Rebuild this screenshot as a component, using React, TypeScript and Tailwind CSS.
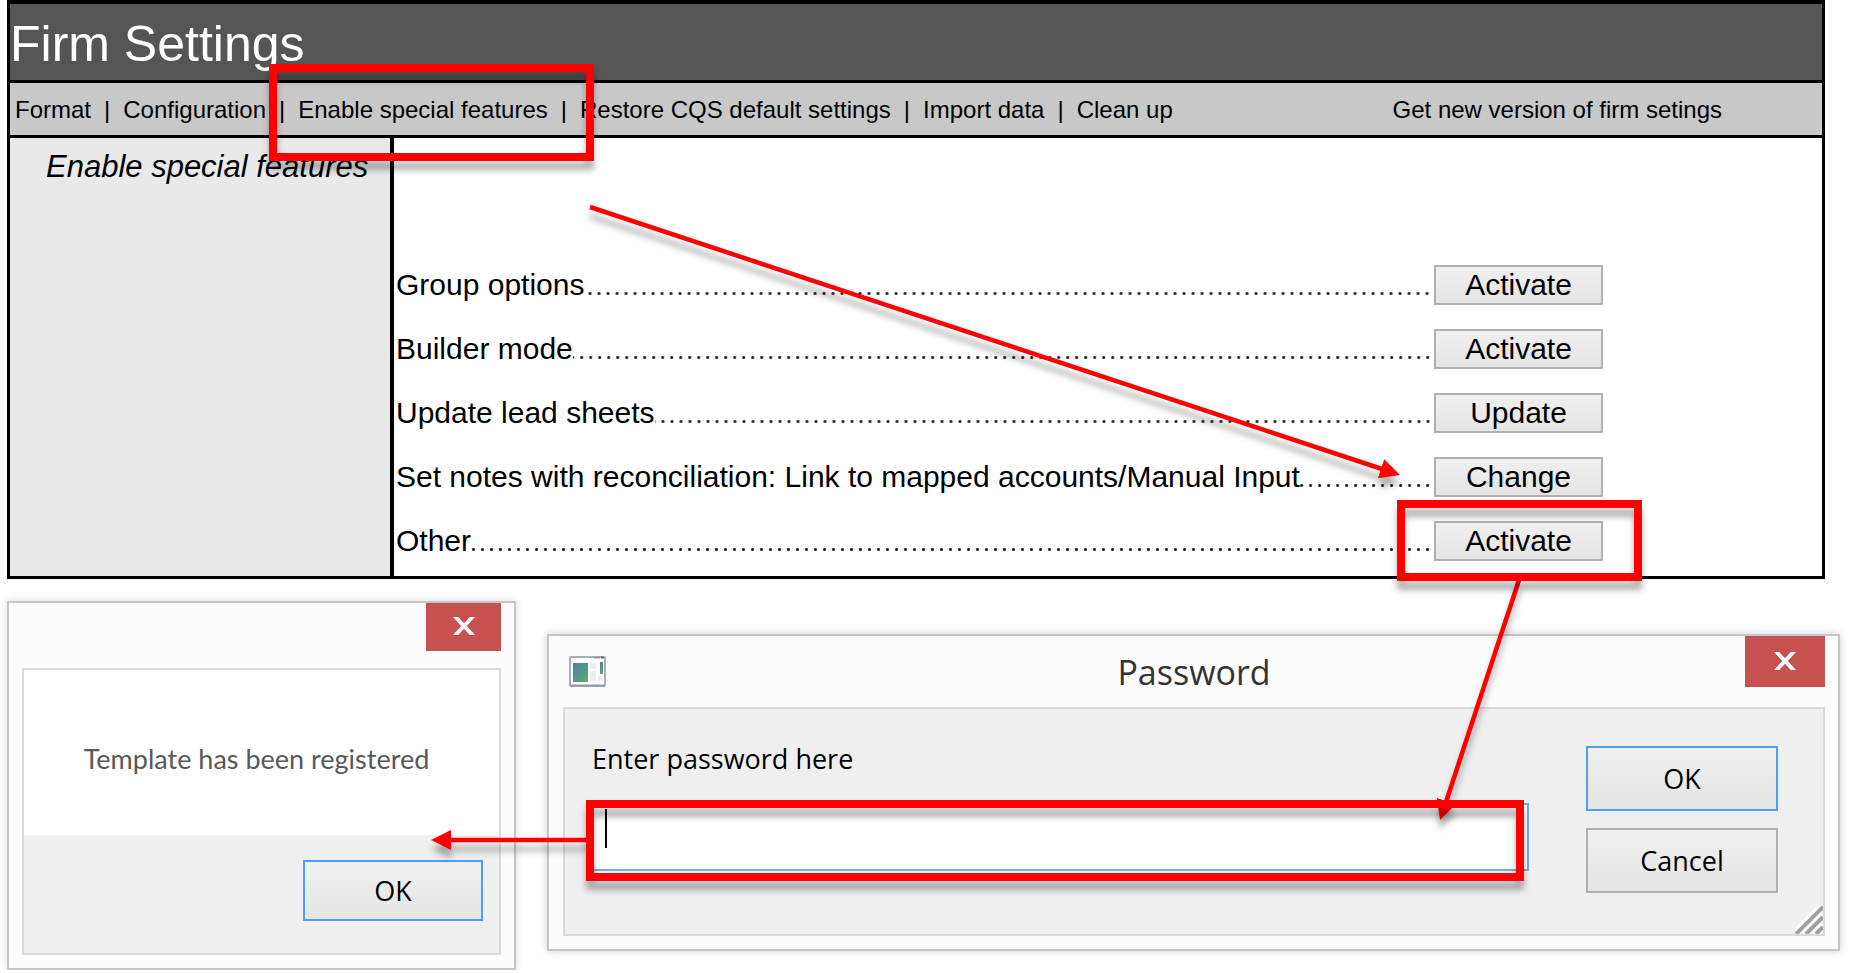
import { clsx } from "clsx";

const menu = [
  "Format",
  "Configuration",
  "Enable special features",
  "Restore CQS default settings",
  "Import data",
  "Clean up",
];

const features = [
  { label: "Group options", action: "Activate" },
  { label: "Builder mode", action: "Activate" },
  { label: "Update lead sheets", action: "Update" },
  { label: "Set notes with reconciliation: Link to mapped accounts/Manual Input", action: "Change" },
  { label: "Other", action: "Activate" },
];

function FirmSettings() {
  return (
    <section className="ml-[7px] mr-[25px] border-[3px] border-t-4 border-black bg-white font-['Liberation_Sans',Arial,sans-serif] text-black">
      <header className="flex h-[79px] items-center border-b-[3px] border-black bg-[#555555] pt-1">
        <h1 className="text-[50px] leading-[56px] text-white">Firm Settings</h1>
      </header>

      <nav className="flex h-[55px] items-center justify-between border-b-[3px] border-black bg-[#c8c8c8] pl-[5px] pr-[100px] pt-[2px] text-2xl whitespace-nowrap">
        <ul className="flex gap-[13px]">
          {menu.map((item, index) => (
            <li key={item} className="flex gap-[13px]">
              {index > 0 && <span>|</span>}
              <a href="#">{item}</a>
            </li>
          ))}
        </ul>
        <a href="#">Get new version of firm setings</a>
      </nav>

      <div className="flex">
        <aside className="w-[384px] shrink-0 border-r-4 border-black bg-[#e9e9e9] pl-9 pt-[11px]">
          <h2 className="text-[31px] leading-9 italic whitespace-nowrap">Enable special features</h2>
        </aside>
        <ul className="flex min-w-0 flex-1 flex-col gap-6 pb-[15px] pl-[2px] pr-[219px] pt-[127px]">
          {features.map((feature) => (
            <li key={feature.label} className="flex h-10 items-center gap-[2px]">
              <div className="flex min-w-0 flex-1 items-baseline text-[30px] leading-9">
                <span className="whitespace-nowrap">{feature.label}</span>
                {/* dot leader */}
                <span className="h-[3px] min-w-0 flex-1 bg-[radial-gradient(circle,#222222_1px,transparent_2px)] bg-size-[9px_3px] bg-right bg-repeat-x" />
              </div>
              <button
                type="button"
                aria-label={`${feature.action} ${feature.label}`}
                className="h-10 w-[169px] border-2 border-[#b0b0b0] bg-linear-to-b from-[#f0f0f0] to-[#e4e4e4] text-[30px] leading-9"
              >
                {feature.action}
              </button>
            </li>
          ))}
        </ul>
      </div>
    </section>
  );
}

function CloseButton({ className }: { className: string }) {
  return (
    <button
      type="button"
      aria-label="Close"
      className={clsx("flex items-center justify-center bg-[#c75050] pb-[2px]", className)}
    >
      <svg width="22" height="18" viewBox="0 0 22 18" fill="#ffffff">
        <path d="M0 0h5.2L11 6.2 16.8 0H22l-8.2 9L22 18h-5.2L11 11.8 5.2 18H0l8.2-9z" />
      </svg>
    </button>
  );
}

function DialogButton({ label, primary, className }: { label: string; primary?: boolean; className: string }) {
  return (
    <button
      type="button"
      className={clsx(
        "border-2 bg-linear-to-b from-[#f0f0f0] to-[#e5e5e5] text-[27px] leading-9 text-black",
        primary ? "border-[#4a9ffa]" : "border-[#b0b0b0]",
        className,
      )}
    >
      {label}
    </button>
  );
}

function MessageDialog() {
  return (
    <section className="w-[509px] shrink-0 border-2 border-[#c6c6c6] bg-[#fcfcfc] px-[13px] pb-[13px] shadow-[0_0_8px_rgba(0,0,0,0.15)]">
      <div className="flex h-[65px] items-start justify-end">
        <CloseButton className="h-12 w-[75px]" />
      </div>
      <div className="border-2 border-[#dadada] bg-[#efefef]">
        <p className="flex h-[165px] items-center justify-center bg-white pr-[10px] pt-[14px] font-['Lato',sans-serif] text-[27px] text-[#595959]">
          Template has been registered
        </p>
        <div className="flex justify-end pb-8 pr-4 pt-[25px]">
          <DialogButton label="OK" primary className="h-[61px] w-[180px]" />
        </div>
      </div>
    </section>
  );
}

function WindowIcon() {
  return (
    <svg width="37" height="31" viewBox="0 0 37 31">
      <defs>
        <linearGradient id="pane" x1="0" y1="0" x2="1" y2="1">
          <stop offset="0" stopColor="#4f7fa6" />
          <stop offset="1" stopColor="#55b070" />
        </linearGradient>
      </defs>
      <rect x="1" y="1" width="35" height="29" rx="1" fill="#ffffff" stroke="#a9b0ba" strokeWidth="2" />
      <path d="M1 29.5h35" stroke="#8f98a5" strokeWidth="2" />
      <path d="M25 1.5h6" stroke="#8f98a5" strokeWidth="2" />
      <path d="M32 1.5h3" stroke="#5f6a80" strokeWidth="2" />
      <rect x="4" y="7" width="15" height="19" fill="url(#pane)" />
      <path d="M21 7h6v6h-6zM21 15h6v10h-6zM29 20h5v5h-5z" fill="#ededed" />
      <rect x="31" y="6" width="3" height="12" fill="url(#pane)" />
    </svg>
  );
}

function PasswordDialog() {
  return (
    <section className="mt-[33px] min-w-0 flex-1 self-start border-2 border-[#c6c6c6] bg-[#fcfcfc] pb-[13px] pl-[14px] pr-[13px] shadow-[0_0_8px_rgba(0,0,0,0.2)]">
      <header className="flex h-[71px] items-start justify-between">
        <div className="w-20 pl-[6px] pt-5">
          <WindowIcon />
        </div>
        <h2 className="pt-[13px] text-[34px] leading-[46px] text-[#333333]">Password</h2>
        <CloseButton className="h-[51px] w-20" />
      </header>
      <div className="relative flex gap-[57px] border-2 border-[#dadada] bg-[#efefef] pb-[41px] pl-[25px] pr-[45px] pt-[37px]">
        <div className="flex min-w-0 flex-1 flex-col">
          <label htmlFor="password" className="pl-[2px] text-[27px] leading-[26px] text-black">
            Enter password here
          </label>
          <div className="relative mt-[31px]">
            <input
              id="password"
              type="password"
              className="block h-[68px] w-full border-2 border-[#6fabe6] bg-white px-4 text-[27px] outline-none"
            />
            <span className="absolute left-[15px] top-[6px] h-[39px] w-[2px] bg-black" />
          </div>
        </div>
        <div className="flex flex-col gap-[17px]">
          <DialogButton label="OK" primary className="h-[65px] w-48" />
          <DialogButton label="Cancel" className="h-[65px] w-48" />
        </div>
        <svg className="absolute bottom-0 right-0" width="28" height="28" viewBox="0 0 28 28">
          <path d="M-1 28L28 -1M9 28L28 9M19 28L28 19" stroke="#ffffff" strokeWidth="7" />
          <path d="M1 28L28 1M11 28L28 11M21 28L28 21" stroke="#a0a0a0" strokeWidth="4" />
        </svg>
      </div>
    </section>
  );
}

function Arrows() {
  return (
    <svg
      className="pointer-events-none absolute left-0 top-0 drop-shadow-[0_9px_3px_rgba(0,0,0,0.3)]"
      width="1850"
      height="973"
      viewBox="0 0 1850 973"
      aria-hidden="true"
    >
      <defs>
        <marker id="head" markerUnits="userSpaceOnUse" markerWidth="20" markerHeight="20" refX="1" refY="10" orient="auto">
          <path d="M0 0L20 10L0 20z" fill="#ff0000" />
        </marker>
      </defs>
      <g stroke="#ff0000" strokeWidth="4.5">
        <path d="M590 207L1382 469" markerEnd="url(#head)" />
        <path d="M1519 580L1446 802" markerEnd="url(#head)" />
        <path d="M588 840H450" markerEnd="url(#head)" />
      </g>
    </svg>
  );
}

function Highlight({ className }: { className: string }) {
  return (
    <div
      className={clsx(
        "pointer-events-none absolute border-8 border-[#ff0000] drop-shadow-[0_9px_3px_rgba(0,0,0,0.3)]",
        className,
      )}
    />
  );
}

export default function App() {
  return (
    <main className="relative bg-white font-['Open_Sans','Noto_Sans',sans-serif]">
      <FirmSettings />
      <div className="ml-[7px] mr-[10px] mt-[22px] flex gap-[31px]">
        <MessageDialog />
        <PasswordDialog />
      </div>

      {/* walkthrough annotations */}
      <Arrows />
      <Highlight className="left-[269px] top-[64px] h-[97px] w-[325px]" />
      <Highlight className="left-[1397px] top-[500px] h-[81px] w-[245px]" />
      <Highlight className="left-[586px] top-[800px] h-[81px] w-[938px]" />
    </main>
  );
}
